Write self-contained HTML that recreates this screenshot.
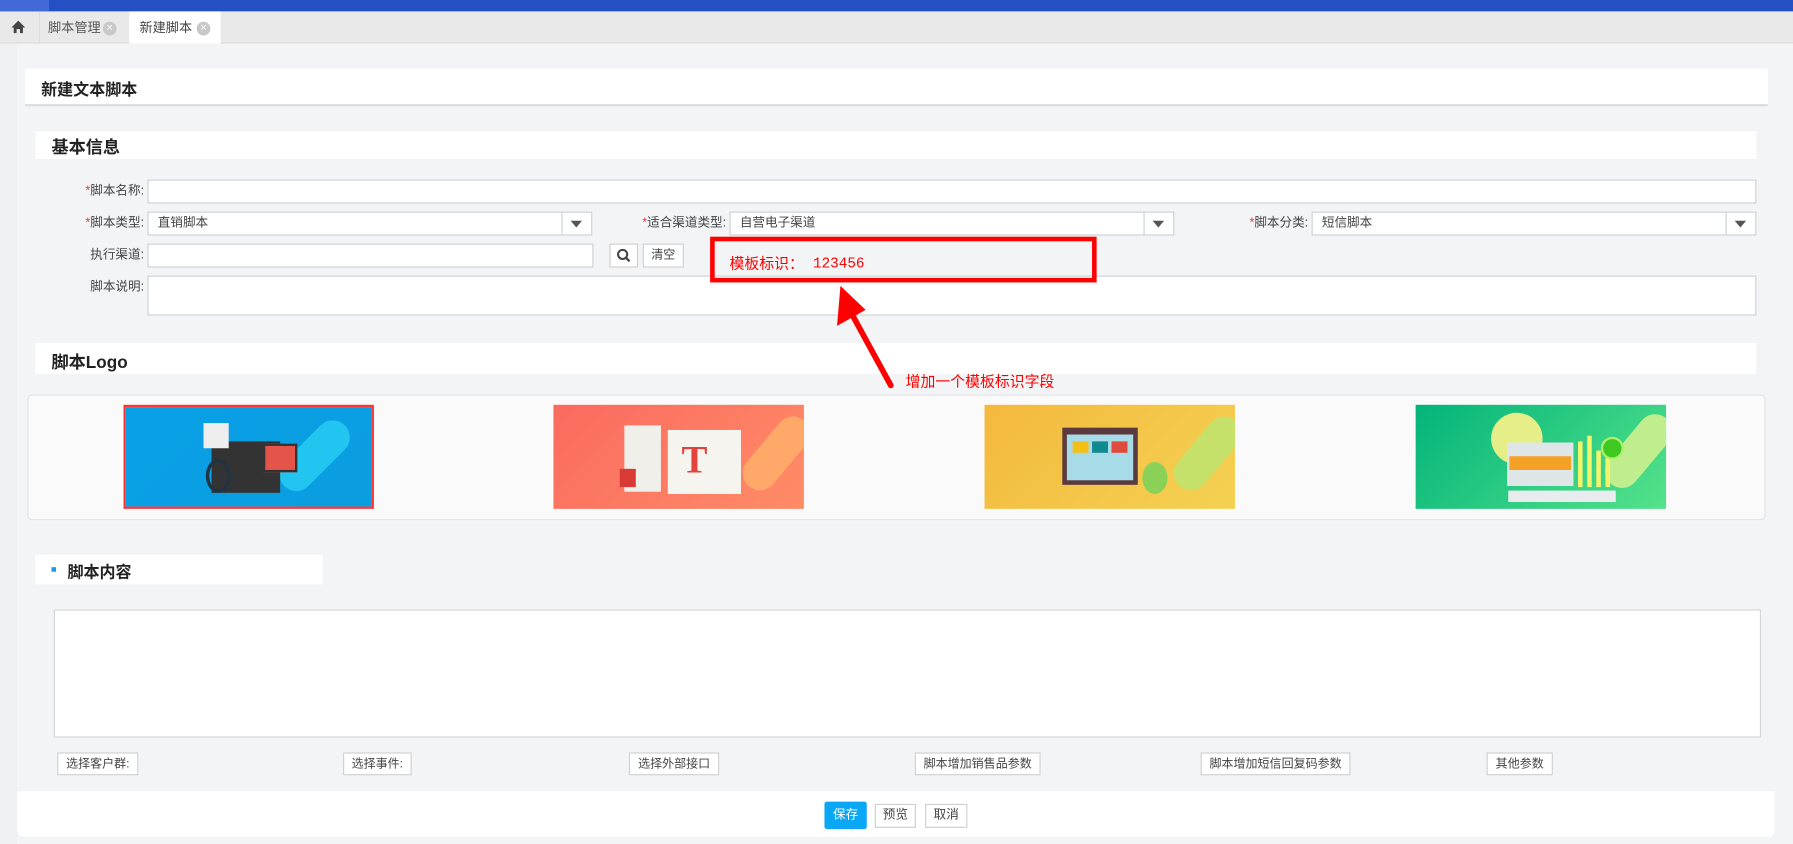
<!DOCTYPE html>
<html><head><meta charset="utf-8"><style>
*{box-sizing:border-box;margin:0;padding:0}
html,body{width:1793px;height:844px;overflow:hidden;background:#f3f4f6}
#w{position:absolute;left:0;top:0;width:1568px;height:738px;transform:scale(1.14349);transform-origin:0 0;font-family:"Liberation Sans","Noto Sans CJK SC",sans-serif;font-size:12px;color:#333}
.a{position:absolute}
.card{position:absolute;background:#fff}
.lbl{position:absolute;text-align:right;font-size:11px;color:#444;line-height:21px}
.lbl i{color:#e33;font-style:normal}
.in{position:absolute;background:#fff;border:1px solid #ccd0d6;height:21px;font-size:11px;line-height:19px;padding-left:8px;color:#444}
.arr{position:absolute;right:0;top:0;width:26px;height:19px;border-left:1px solid #ccd0d6}
.arr:after{content:"";position:absolute;left:7px;top:7px;border:5px solid transparent;border-top:6px solid #555;border-bottom:0}
.btn{position:absolute;background:#fff;border:1px solid #cfcfcf;height:20px;font-size:10.5px;line-height:18px;text-align:center;color:#444}
.img{position:absolute;top:354px;width:219px;height:91px;overflow:hidden}
</style></head><body><div id="w">
<div class="a" style="left:0;top:0;width:1568px;height:10px;background:#2450c4"></div>
<div class="a" style="left:0;top:0;width:43px;height:10px;background:#4169d8"></div>
<div class="a" style="left:0;top:10px;width:1568px;height:28px;background:#e9e9e9;border-bottom:1px solid #dcdcdc"></div>
<div class="a" style="left:0;top:10px;width:35px;height:27px;border-right:1px solid #ddd"><svg width="35" height="27"><path d="M10 14 L16 8 L22 14 H20 V19 H17.5 V15.5 H14.5 V19 H12 V14Z" fill="#444"/></svg></div>
<div class="a" style="left:42px;top:16px;font-size:11.5px;color:#555">脚本管理</div>
<div class="a" style="left:90px;top:19px;width:12px;height:12px;border-radius:50%;background:#c8c8c8;color:#fff;font-size:10px;line-height:12px;text-align:center">×</div>
<div class="a" style="left:113px;top:10px;width:80px;height:28px;background:#fff"></div>
<div class="a" style="left:122px;top:16px;font-size:11.5px;color:#444">新建脚本</div>
<div class="a" style="left:172px;top:19px;width:12px;height:12px;border-radius:50%;background:#c8c8c8;color:#fff;font-size:10px;line-height:12px;text-align:center">×</div>
<div class="a" style="left:0;top:38px;width:15px;height:700px;background:#eff0f2"></div>

<div class="card" style="left:22px;top:60px;width:1524px;height:33px;border-bottom:2px solid #ddd"></div>
<div class="a" style="left:36px;top:68px;font-size:14px;font-weight:bold;color:#222">新建文本脚本</div>

<div class="card" style="left:31px;top:115px;width:1505px;height:24px"></div>
<div class="a" style="left:45px;top:118px;font-size:15px;font-weight:bold;color:#222">基本信息</div>

<div class="lbl" style="left:40px;top:157px;width:86px"><i>*</i>脚本名称:</div>
<div class="in" style="left:129px;top:157px;width:1407px"></div>
<div class="lbl" style="left:40px;top:185px;width:86px"><i>*</i>脚本类型:</div>
<div class="in" style="left:129px;top:185px;width:389px">直销脚本<div class="arr"></div></div>
<div class="lbl" style="left:520px;top:185px;width:115px"><i>*</i>适合渠道类型:</div>
<div class="in" style="left:638px;top:185px;width:389px">自营电子渠道<div class="arr"></div></div>
<div class="lbl" style="left:1050px;top:185px;width:94px"><i>*</i>脚本分类:</div>
<div class="in" style="left:1147px;top:185px;width:389px">短信脚本<div class="arr"></div></div>
<div class="lbl" style="left:40px;top:213px;width:86px">执行渠道:</div>
<div class="in" style="left:129px;top:213px;width:390px"></div>
<div class="btn" style="left:533px;top:213px;width:25px;height:21px"><svg width="23" height="19"><circle cx="10.5" cy="8.5" r="4" fill="none" stroke="#444" stroke-width="1.8"/><path d="M13.5 11.5 L16.5 14.5" stroke="#444" stroke-width="2"/></svg></div>
<div class="btn" style="left:562px;top:213px;width:36px;height:21px;line-height:19px">清空</div>
<div class="lbl" style="left:40px;top:241px;width:86px">脚本说明:</div>
<div class="in" style="left:129px;top:241px;width:1407px;height:35px"></div>

<div class="card" style="left:31px;top:300px;width:1505px;height:27px"></div>
<div class="a" style="left:45px;top:306px;font-size:15px;font-weight:bold;color:#222">脚本Logo</div>

<div class="a" style="left:24px;top:345px;width:1520px;height:110px;background:#fafafa;border:1px solid #e2e2e2;border-radius:4px"></div>
<div class="img" style="left:108px;background:linear-gradient(135deg,#0aa0e6,#0a9ee0);border:2px solid #f33">
<div class="a" style="left:150px;top:5px;width:30px;height:75px;border-radius:15px;background:#22c5f0;transform:rotate(45deg)"></div>
<div class="a" style="left:75px;top:30px;width:60px;height:45px;background:#333"></div>
<div class="a" style="left:120px;top:32px;width:30px;height:25px;background:#e5544a;border:2px solid #333"></div>
<div class="a" style="left:68px;top:14px;width:22px;height:22px;background:#eee"></div>
<div class="a" style="left:70px;top:45px;width:22px;height:30px;border:3px solid #234;border-radius:50%"></div>
</div>
<div class="img" style="left:484px;background:linear-gradient(135deg,#fa6a60,#ff8c66)">
<div class="a" style="left:180px;top:5px;width:30px;height:75px;border-radius:15px;background:#ffa86a;transform:rotate(40deg)"></div>
<div class="a" style="left:62px;top:18px;width:32px;height:58px;background:#f1efe9"></div>
<div class="a" style="left:100px;top:22px;width:64px;height:56px;background:#f6f4ef"></div>
<div class="a" style="left:112px;top:30px;font:bold 34px 'Liberation Serif',serif;color:#e3433c">T</div>
<div class="a" style="left:58px;top:56px;width:14px;height:16px;background:#d83a35"></div>
</div>
<div class="img" style="left:861px;background:linear-gradient(135deg,#f3b93e,#f4d152)">
<div class="a" style="left:180px;top:5px;width:30px;height:75px;border-radius:15px;background:#c5e16a;transform:rotate(40deg)"></div>
<div class="a" style="left:68px;top:20px;width:66px;height:50px;background:#5b3a3f"></div>
<div class="a" style="left:72px;top:26px;width:58px;height:40px;background:#a7dbe8"></div>
<div class="a" style="left:77px;top:32px;width:14px;height:10px;background:#f5bf1a"></div>
<div class="a" style="left:94px;top:32px;width:14px;height:10px;background:#10898f"></div>
<div class="a" style="left:111px;top:32px;width:14px;height:10px;background:#e04b3e"></div>
<div class="a" style="left:138px;top:50px;width:22px;height:28px;border-radius:50%;background:#8bd158"></div>
</div>
<div class="img" style="left:1238px;background:linear-gradient(135deg,#02b47a,#55e28a)">
<div class="a" style="left:180px;top:3px;width:30px;height:75px;border-radius:15px;background:#c0ee8e;transform:rotate(40deg)"></div>
<div class="a" style="left:66px;top:7px;width:45px;height:45px;border-radius:50%;background:#e6ee88"></div>
<div class="a" style="left:80px;top:33px;width:58px;height:38px;background:#dfe6e8"></div>
<div class="a" style="left:82px;top:45px;width:54px;height:12px;background:#f5a027"></div>
<div class="a" style="left:142px;top:32px;width:4px;height:40px;background:#f3f46b"></div>
<div class="a" style="left:150px;top:27px;width:4px;height:45px;background:#f3f46b"></div>
<div class="a" style="left:158px;top:40px;width:4px;height:32px;background:#f3f46b"></div>
<div class="a" style="left:166px;top:45px;width:4px;height:27px;background:#f3f46b"></div>
<div class="a" style="left:162px;top:28px;width:20px;height:20px;border-radius:50%;background:#3fc81f;border:2px solid #aef06c"></div>
<div class="a" style="left:81px;top:75px;width:94px;height:10px;background:#e8ecee"></div>
</div>

<div class="card" style="left:31px;top:485px;width:251px;height:26px"></div>
<div class="a" style="left:45px;top:496px;width:4px;height:4px;background:#1e9ae0"></div>
<div class="a" style="left:59px;top:490px;font-size:14px;font-weight:bold;color:#222">脚本内容</div>
<div class="a" style="left:47px;top:533px;width:1493px;height:112px;background:#fff;border:1px solid #d4d4d4"></div>

<div class="btn" style="left:50px;top:658px;width:71px">选择客户群:</div>
<div class="btn" style="left:300px;top:658px;width:60px">选择事件:</div>
<div class="btn" style="left:550px;top:658px;width:79px">选择外部接口</div>
<div class="btn" style="left:800px;top:658px;width:110px">脚本增加销售品参数</div>
<div class="btn" style="left:1050px;top:658px;width:131px">脚本增加短信回复码参数</div>
<div class="btn" style="left:1300px;top:658px;width:58px">其他参数</div>

<div class="card" style="left:15px;top:692px;width:1537px;height:40px;border-radius:0 0 6px 6px"></div>
<div class="btn" style="left:721px;top:701px;width:37px;height:24px;line-height:22px;background:#0aa7f5;border-color:#0aa7f5;color:#fff;font-size:11px;border-radius:2px">保存</div>
<div class="btn" style="left:765px;top:703px;width:36px;height:21px;line-height:19px;font-size:11px">预览</div>
<div class="btn" style="left:809px;top:703px;width:37px;height:21px;line-height:19px;font-size:11px">取消</div>

<div class="a" style="left:621px;top:207px;width:338px;height:40px;border:4px solid #f00"></div>
<div class="a" style="left:638px;top:220px;font-size:13px;color:#f00">模板标识：</div>
<div class="a" style="left:711px;top:224px;font-size:12.5px;color:#f00;font-family:'Liberation Mono',monospace">123456</div>
<svg class="a" style="left:720px;top:245px" width="80" height="100"><path d="M59 92 L24 28" stroke="#f00" stroke-width="5" stroke-linecap="round"/><path d="M15 5 L12 40 L37 26Z" fill="#f00"/></svg>
<div class="a" style="left:792px;top:323px;font-size:13px;color:#f00">增加一个模板标识字段</div>
</div></body></html>
